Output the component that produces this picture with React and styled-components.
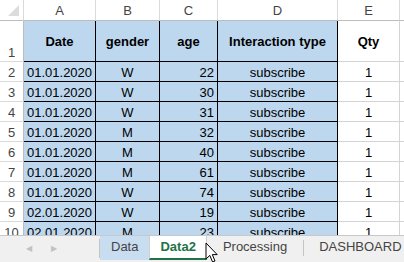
import React from 'react'
import styled, { createGlobalStyle } from 'styled-components'

const Global = createGlobalStyle`
  html, body {
    margin: 0;
    padding: 0;
    background: #ffffff;
  }
  body {
    font-family: 'Liberation Sans', Arial, sans-serif;
  }
`

const Page = styled.div`
  position: relative;
  width: 404px;
  height: 262px;
  display: flex;
  flex-direction: column;
  overflow: hidden;
  background: #ffffff;
`

const Sheet = styled.div`
  height: 235px;
  flex-shrink: 0;
  overflow: hidden;
  display: grid;
  grid-template-columns: 24px 72px 64px 58px 120px 62px 1fr;
  grid-template-rows: 21px 41px;
  grid-auto-rows: 20px;
  font-size: 13px;
  color: #000;
`

const ColHead = styled.div`
  display: flex;
  align-items: center;
  justify-content: center;
  color: #444;
  font-size: 13px;
  border-right: 1px solid #dadada;
  border-bottom: 1px solid #bdbdbd;
  box-sizing: border-box;
`

const Corner = styled.div`
  position: relative;
  border-right: 1px solid #dadada;
  border-bottom: 1px solid #bdbdbd;
  box-sizing: border-box;
  &::after {
    content: '';
    position: absolute;
    right: 4px;
    bottom: 4px;
    width: 0;
    height: 0;
    border-left: 11px solid transparent;
    border-bottom: 11px solid #dcdcdc;
  }
`

const RowHead = styled.div`
  display: flex;
  align-items: flex-end;
  justify-content: center;
  padding-bottom: 1px;
  color: #444;
  border-right: 1px solid #bdbdbd;
  border-bottom: 1px solid #dadada;
  box-sizing: border-box;
`

const Cell = styled.div`
  display: flex;
  align-items: ${(p) => (p.$head ? 'center' : 'flex-end')};
  justify-content: ${(p) => p.$align || 'center'};
  padding: ${(p) => (p.$head ? '0 3px' : '0 3px 1px')};
  font-weight: ${(p) => (p.$head ? 700 : 400)};
  background: ${(p) => (p.$fill ? '#bdd7ee' : '#ffffff')};
  border-right: 1px solid ${(p) => (p.$fill ? '#000' : '#d4d4d4')};
  border-bottom: 1px solid ${(p) => (p.$fill ? '#000' : '#d4d4d4')};
  box-sizing: border-box;
  white-space: nowrap;
`

const Tabs = styled.div`
  flex: 1;
  display: flex;
  align-items: stretch;
  overflow: hidden;
  background: #f0f0f0;
  border-top: 1px solid #c8c8c8;
  font-size: 13px;
`

const Nav = styled.div`
  flex: 0 0 100px;
  display: flex;
  align-items: center;
  justify-content: flex-start;
  padding-left: 26px;
  gap: 19px;
  box-sizing: border-box;
  color: #c2c2c2;
  font-size: 8px;
  border-right: 1px solid #c4c4c4;
  margin: 3px 0 4px;
`

const Tab = styled.div`
  flex: 0 0 auto;
  display: flex;
  align-items: center;
  justify-content: center;
  padding: 0 ${(p) => p.$pad || 10}px;
  margin-top: -1px;
  margin-bottom: 2px;
  white-space: nowrap;
  background: ${(p) => (p.$active ? '#ffffff' : p.$tint ? '#c9ddf1' : 'transparent')};
  color: ${(p) => (p.$active ? '#217346' : '#444')};
  font-weight: ${(p) => (p.$active ? 700 : 400)};
  border-bottom: 2px solid ${(p) => (p.$active ? '#217346' : 'transparent')};
  border-left: 1px solid ${(p) => (p.$active ? '#d0d0d0' : 'transparent')};
  border-right: 1px solid ${(p) => (p.$active ? '#d0d0d0' : 'transparent')};
`

const Sep = styled.div`
  flex: 0 0 1px;
  background: #c4c4c4;
  margin: 4px 0 6px;
`

const Cursor = styled.svg`
  position: absolute;
  left: 205px;
  top: 242px;
`

const rows = [
  ['01.01.2020', 'W', 22],
  ['01.01.2020', 'W', 30],
  ['01.01.2020', 'W', 31],
  ['01.01.2020', 'M', 32],
  ['01.01.2020', 'M', 40],
  ['01.01.2020', 'M', 61],
  ['01.01.2020', 'W', 74],
  ['02.01.2020', 'W', 19],
  ['02.01.2020', 'M', 23],
]

export default function App() {
  return (
    <Page>
      <Global />
      <Sheet>
        <Corner />
        {['A', 'B', 'C', 'D', 'E'].map((c) => (
          <ColHead key={c}>{c}</ColHead>
        ))}
        <ColHead />

        <RowHead>1</RowHead>
        <Cell $head $fill>Date</Cell>
        <Cell $head $fill>gender</Cell>
        <Cell $head $fill>age</Cell>
        <Cell $head $fill>Interaction type</Cell>
        <Cell $head>Qty</Cell>
        <Cell />

        {rows.map((r, i) => (
          <React.Fragment key={i}>
            <RowHead>{i + 2}</RowHead>
            <Cell $fill $align='flex-start'>{r[0]}</Cell>
            <Cell $fill>{r[1]}</Cell>
            <Cell $fill $align='flex-end'>{r[2]}</Cell>
            <Cell $fill>subscribe</Cell>
            <Cell>1</Cell>
            <Cell />
          </React.Fragment>
        ))}
      </Sheet>
      <Tabs>
        <Nav>
          <span>◀</span>
          <span>▶</span>
        </Nav>
        <Tab $tint $pad={10}>Data</Tab>
        <Tab $active $pad={10}>Data2</Tab>
        <Tab $pad={15}>Processing</Tab>
        <Sep />
        <Tab $pad={14}>DASHBOARD</Tab>
      </Tabs>
      <Cursor width='14' height='22' viewBox='0 0 14 22'>
        <path
          d='M1 1 L1 17 L4.8 13.4 L7.6 20 L10 19 L7.3 12.6 L12.2 12.6 Z'
          fill='#fff'
          stroke='#000'
          strokeWidth='1'
          strokeLinejoin='round'
        />
      </Cursor>
    </Page>
  )
}
